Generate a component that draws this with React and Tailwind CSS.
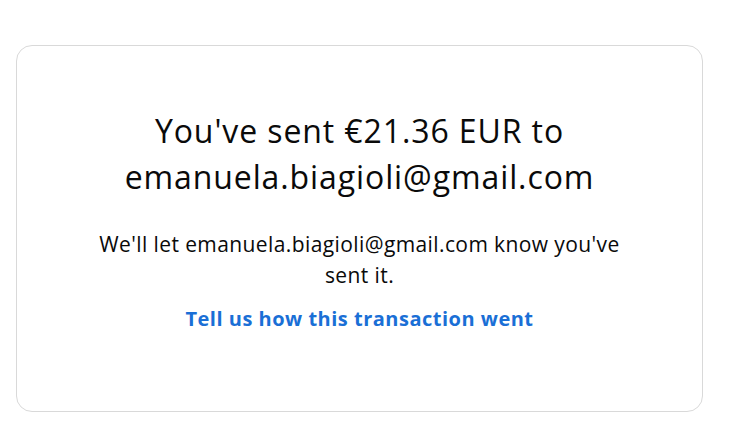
export default function App() {
  return (
    <div className="w-[755px] h-[426px] bg-white pt-[45px] pl-4" style={{ fontFamily: "'Open Sans', sans-serif" }}>
      <div className="w-[687px] h-[367px] rounded-[16px] border border-[#d9d9d9] flex flex-col items-center pt-[62px] px-10 text-center">
        <h1 className="text-[32px] leading-[46px] tracking-[0.9px] text-[#0a0a0a] font-normal max-w-[520px]">
          You've sent €21.36 EUR to emanuela.biagioli@gmail.com
        </h1>
        <p className="mt-[29px] text-[21px] leading-[31px] tracking-[0.4px] text-[#0a0a0a] max-w-[540px]">
          We'll let emanuela.biagioli@gmail.com know you've sent it.
        </p>
        <a href="#" className="mt-[14px] text-[20px] leading-[28px] tracking-[0.5px] font-bold text-[#1a6fd6]">
          Tell us how this transaction went
        </a>
      </div>
    </div>
  );
}
